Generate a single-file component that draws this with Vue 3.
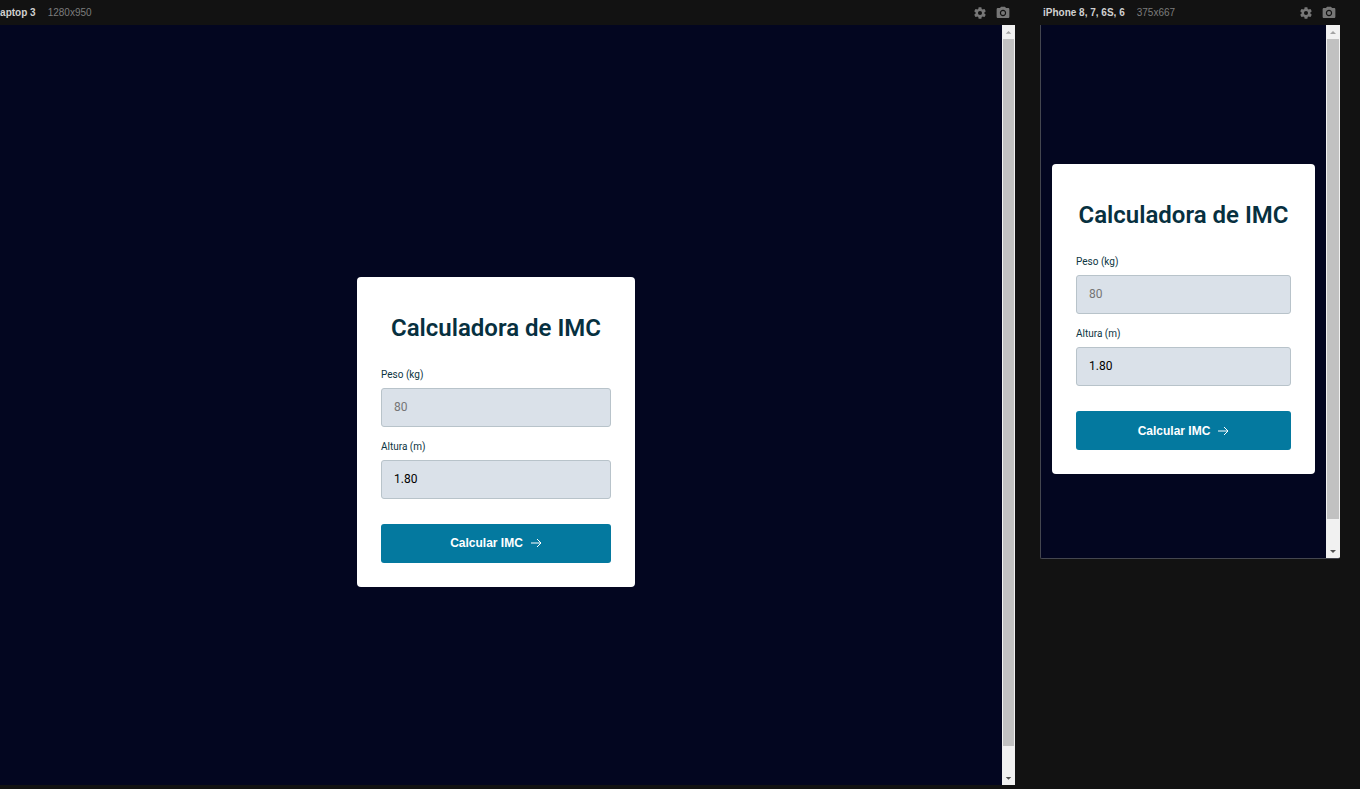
<script setup>
import { ref } from 'vue'

const devices = ref([
  { id: 'laptop', name: 'Laptop 3', size: '1280x950', weight: '', height: '1.80' },
  { id: 'phone', name: 'iPhone 8, 7, 6S, 6', size: '375x667', weight: '', height: '1.80' },
])
</script>

<template>
  <main class="board">
    <section v-for="d in devices" :key="d.id" class="device" :class="d.id">
      <header class="bar">
        <strong class="name">{{ d.name }}</strong>
        <span class="size">{{ d.size }}</span>
        <button class="tool" type="button" aria-label="Settings">
          <svg viewBox="0 0 24 24" width="14" height="14">
            <path d="M19.43 12.98c.04-.32.07-.64.07-.98s-.03-.66-.07-.98l2.11-1.65c.19-.15.24-.42.12-.64l-2-3.46c-.12-.22-.39-.3-.61-.22l-2.49 1c-.52-.4-1.08-.73-1.69-.98l-.38-2.65A.49.49 0 0 0 14 2h-4c-.25 0-.46.18-.49.42l-.38 2.65c-.61.25-1.17.59-1.69.98l-2.49-1c-.23-.09-.49 0-.61.22l-2 3.46c-.13.22-.07.49.12.64l2.11 1.65c-.04.32-.07.65-.07.98s.03.66.07.98l-2.11 1.65c-.19.15-.24.42-.12.64l2 3.46c.12.22.39.3.61.22l2.49-1c.52.4 1.08.73 1.69.98l.38 2.65c.03.24.24.42.49.42h4c.25 0 .46-.18.49-.42l.38-2.65c.61-.25 1.17-.59 1.69-.98l2.49 1c.23.09.49 0 .61-.22l2-3.46c.12-.22.07-.49-.12-.64l-2.11-1.65zM12 15.5a3.5 3.5 0 1 1 0-7 3.5 3.5 0 0 1 0 7z" />
          </svg>
        </button>
        <button class="tool" type="button" aria-label="Screenshot">
          <svg viewBox="1 1 22 22" width="14" height="14">
            <circle cx="12" cy="12" r="3.2" />
            <path d="M9 2 7.170 4H4c-1.100 0-2 .9-2 2v12c0 1.100.9 2 2 2h16c1.100 0 2-.9 2-2V6c0-1.100-.9-2-2-2h-3.170L15 2H9zm3 15c-2.760 0-5-2.240-5-5s2.240-5 5-5 5 2.240 5 5-2.240 5-5 5z" />
          </svg>
        </button>
      </header>

      <div class="frame">
        <div class="screen">
          <form class="card" @submit.prevent>
            <h1>Calculadora de IMC</h1>
            <label :for="d.id + '-peso'">Peso (kg)</label>
            <input :id="d.id + '-peso'" v-model="d.weight" type="text" inputmode="decimal" placeholder="80">
            <label :for="d.id + '-altura'">Altura (m)</label>
            <input :id="d.id + '-altura'" v-model="d.height" type="text" inputmode="decimal">
            <button class="submit" type="submit">
              Calcular IMC
              <svg viewBox="0 0 12 12" width="12" height="12">
                <path d="M1 6h10M7 2l4 4-4 4" />
              </svg>
            </button>
          </form>
        </div>
        <div class="scroll" aria-hidden="true">
          <svg class="up" viewBox="0 0 12 14" width="12" height="14"><path d="M3 9h6L6 6z" /></svg>
          <div class="track"><div class="thumb"></div></div>
          <svg class="down" viewBox="0 0 12 14" width="12" height="14"><path d="M3 6h6L6 9z" /></svg>
        </div>
      </div>
    </section>
  </main>
</template>

<style>
body {
  background: #121212;
  overflow: hidden;
}
</style>

<style scoped>
.board {
  display: flex;
  align-items: flex-start;
  gap: 25px;
  min-height: 100vh;
  padding-right: 20px;
  box-sizing: border-box;
  overflow: hidden;
  background: #121212;
  font-family: Roboto, "Liberation Sans", sans-serif;
}
.laptop {
  flex: 1;
  min-width: 0;
  margin-left: -10px;
}
.phone {
  flex: 0 0 300px;
}
.bar {
  display: flex;
  align-items: center;
  height: 25px;
  padding: 0 4px 0 3px;
  font: 10px/14px "Liberation Sans", Arial, sans-serif;
}
.name {
  color: #d0d0d0;
}
.size {
  flex: 1;
  margin-left: 12px;
  color: #7c7c7c;
}
.laptop .bar {
  padding-left: 4px;
  padding-right: 5px;
}
.tool {
  display: flex;
  margin-left: 9px;
  padding: 0;
  border: 0;
  background: none;
}
.tool svg {
  fill: #777;
}
.frame {
  display: flex;
  box-sizing: border-box;
  overflow: hidden;
}
.laptop .frame {
  aspect-ratio: 1280 / 949;
}
.phone .frame {
  aspect-ratio: 375 / 667;
  border: 1px solid #44464f;
  border-width: 0 0 1px 1px;
  border-radius: 0 0 2px 2px;
}
.screen {
  flex: 1;
  display: flex;
  align-items: center;
  justify-content: center;
  padding: 54px 11px 0;
  background: #030620;
}
.phone .screen {
  padding-top: 56px;
}
.card {
  box-sizing: border-box;
  display: flex;
  flex-direction: column;
  width: 100%;
  max-width: 278px;
  padding: 24px;
  border-radius: 4px;
  background: #fff;
}
h1 {
  margin: 0 -10px 14px;
  color: #07303f;
  font-size: 24px;
  font-weight: 600;
  line-height: 54px;
  text-align: center;
  white-space: nowrap;
}
label {
  margin-bottom: 7px;
  color: #0c3542;
  font-size: 10px;
  line-height: 12px;
}
input {
  box-sizing: border-box;
  width: 100%;
  height: 39px;
  margin-bottom: 14px;
  padding: 0 12px 1px;
  border: 1px solid #b8c3ca;
  border-radius: 3px;
  background: #dae1e9;
  color: #000;
  font: 12px/16px Roboto, sans-serif;
}
input::placeholder {
  color: #757575;
}
.submit {
  display: flex;
  align-items: center;
  justify-content: center;
  gap: 7px;
  height: 39px;
  margin-top: 11px;
  padding: 0;
  border: 0;
  border-radius: 3px;
  background: #04799f;
  color: #fff;
  font: bold 12px/16px "Liberation Sans", Arial, sans-serif;
}
.submit svg {
  fill: none;
  stroke: #fff;
}
.scroll {
  display: flex;
  flex-direction: column;
  width: 11px;
  padding: 0 1px;
  background: #f1f1f1;
}
.phone .scroll {
  width: 12px;
}
.scroll svg {
  width: 100%;
  fill: #a3a3a3;
}
.scroll .down {
  fill: #505050;
}
.track {
  flex: 1;
}
.thumb {
  height: 96.6%;
  background: #c1c1c1;
}
.phone .thumb {
  height: 95.2%;
}
</style>
